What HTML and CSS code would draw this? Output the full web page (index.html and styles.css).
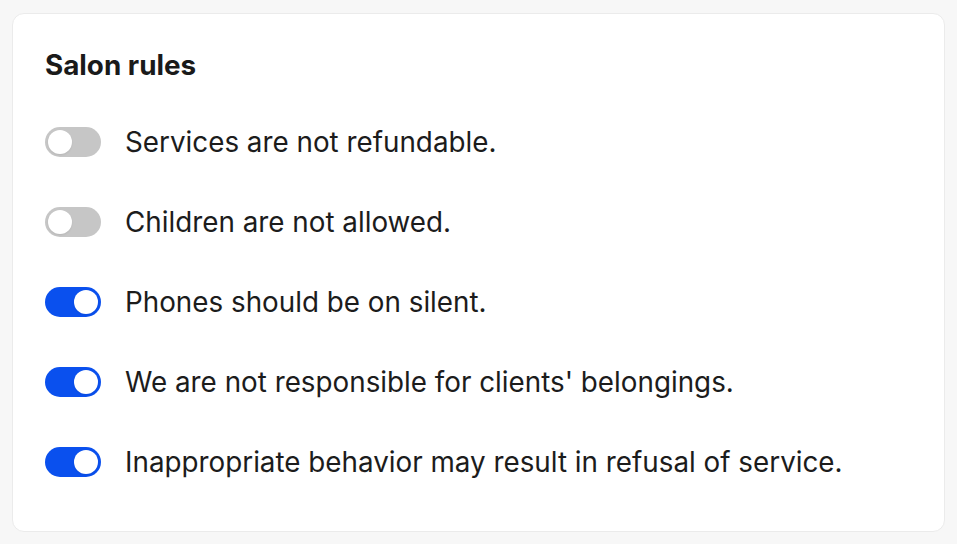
FILE: index.html
```html
<!DOCTYPE html>
<html lang="en">
<head>
<meta charset="utf-8">
<title>Salon rules</title>
<link rel="stylesheet" href="styles.css">
</head>
<body>
<section class="card">
  <h2 class="title">Salon rules</h2>
  <ul class="rules">
    <li class="rule"><span class="toggle"></span><span class="label">Services are not refundable.</span></li>
    <li class="rule"><span class="toggle"></span><span class="label">Children are not allowed.</span></li>
    <li class="rule"><span class="toggle on"></span><span class="label">Phones should be on silent.</span></li>
    <li class="rule"><span class="toggle on"></span><span class="label">We are not responsible for clients' belongings.</span></li>
    <li class="rule"><span class="toggle on"></span><span class="label">Inappropriate behavior may result in refusal of service.</span></li>
  </ul>
</section>
</body>
</html>
```
FILE: styles.css
```css
html, body {
  margin: 0;
  height: 100%;
  background: #f7f7f7;
}
body {
  padding: 13px 12px 12px 12px;
  box-sizing: border-box;
  font-family: Inter, "Noto Sans", sans-serif;
  color: #1c1c1c;
}
.card {
  background: #fff;
  border: 1px solid #ebebeb;
  border-radius: 12px;
  height: 519px;
  box-sizing: border-box;
  padding: 36px 32px 0 32px;
}
.title {
  margin: 0;
  font-size: 27.8px;
  font-weight: 700;
  line-height: 30px;
  color: #1a1a1a;
}
.rules {
  list-style: none;
  margin: 46px 0 0 0;
  padding: 0;
  display: flex;
  flex-direction: column;
  gap: 48px;
}
.rule {
  display: flex;
  align-items: center;
  gap: 24px;
  height: 32px;
}
.toggle {
  width: 56px;
  height: 30px;
  border-radius: 15px;
  background: #c6c6c6;
  position: relative;
  flex: none;
}
.toggle::after {
  content: "";
  position: absolute;
  top: 3px;
  left: 3px;
  width: 24px;
  height: 24px;
  border-radius: 50%;
  background: #fff;
  box-shadow: 0 1px 2px rgba(0, 0, 0, 0.08);
}
.toggle.on {
  background: #0a50ee;
}
.toggle.on::after {
  left: 29px;
}
.label {
  font-size: 27.8px;
  line-height: 32px;
}
```
